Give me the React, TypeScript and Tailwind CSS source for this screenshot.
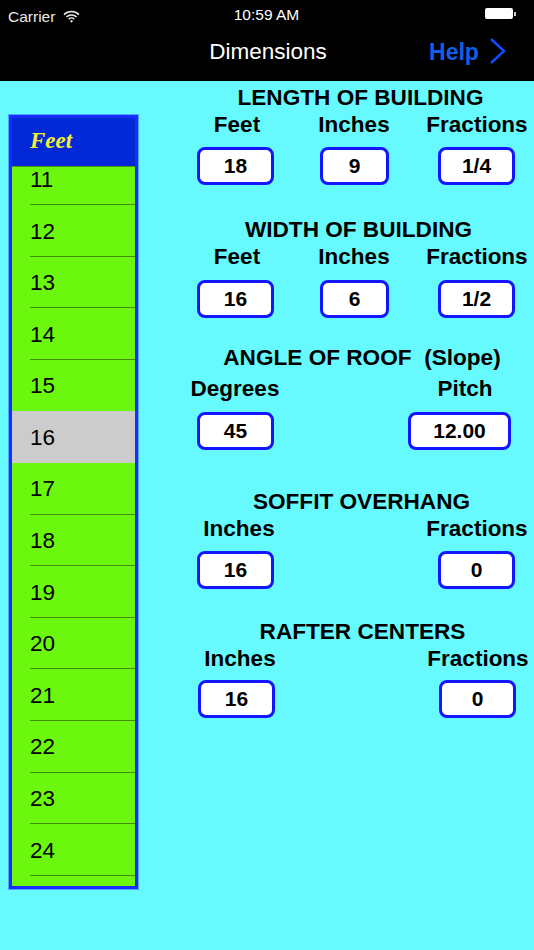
import React from "react";

const rows = [11, 12, 13, 14, 15, 16, 17, 18, 19, 20, 21, 22, 23, 24];

function Box({ value, className }: { value: string; className: string }) {
  return (
    <div className={`h-[38px] flex items-center justify-center rounded-[8px] border-[3px] border-[#1414ff] bg-white text-[21px] font-bold text-black shrink-0 ${className}`}>
      {value}
    </div>
  );
}

function Label({ text, className }: { text: string; className: string }) {
  return <div className={`text-center text-[22.5px] leading-[26px] font-bold text-black whitespace-nowrap shrink-0 ${className}`}>{text}</div>;
}

function Title({ text, className = "" }: { text: string; className?: string }) {
  return <div className={`text-center text-[22.6px] leading-[26px] font-bold text-black whitespace-pre ${className}`}>{text}</div>;
}

export default function App() {
  return (
    <div className="w-[534px] h-[950px] overflow-hidden flex flex-col bg-[#66faff] font-['Liberation_Sans',sans-serif]">
      <header className="h-[81px] bg-black text-white shrink-0 flex flex-col">
        <div className="h-[28px] relative flex items-center justify-center text-[15.5px] pt-[1px]">
          <div className="absolute left-[8px] top-[5px] flex items-center gap-[8px] text-[#e8e8e8]">
            <span>Carrier</span>
            <svg width="17" height="13" viewBox="0 0 17 13">
              <path d="M1 4.6a10.6 10.6 0 0 1 15 0M3.4 7a7.2 7.2 0 0 1 10.2 0M5.7 9.2a4 4 0 0 1 5.6 0" fill="none" stroke="#e8e8e8" strokeWidth="1.5" />
              <path d="M8.5 12.8 6.9 11a2.3 2.3 0 0 1 3.2 0z" fill="#e8e8e8" />
            </svg>
          </div>
          <span className="-ml-[1px]">10:59 AM</span>
          <div className="absolute left-[485px] top-[8px] flex items-center">
            <div className="w-[28px] h-[11px] rounded-[2px] bg-white" />
            <div className="w-[1.5px] h-[4px] bg-white/80 ml-[1px]" />
          </div>
        </div>
        <div className="h-[48px] relative flex items-center justify-center">
          <span className="text-[22.5px] -mt-[1px] ml-[2px]">Dimensions</span>
          <div className="absolute left-[425px] top-[7px] flex items-center">
            <span className="text-[23px] font-bold text-[#0f5fe8] w-[58px] text-center">Help</span>
            <svg width="18" height="28" viewBox="0 0 18 28" className="ml-[6px] -mt-[2px]">
              <path d="M2 2 15 14 2 26" fill="none" stroke="#0a50ff" strokeWidth="2.4" />
            </svg>
          </div>
        </div>
      </header>

      <main className="flex flex-1 min-h-0">
        <aside className="w-[129px] h-[774px] ml-[9px] mt-[34px] shrink-0 border-[3px] border-[#1a2cff] flex flex-col outline outline-1 outline-[#4aa8ff]">
          <div className="h-[48px] shrink-0 bg-[#0328d8] flex items-center pl-[18px] pb-[2px] font-['Liberation_Serif',serif] italic font-bold text-[23px] text-[#f5f032]">
            Feet
          </div>
          <div className="flex-1 overflow-hidden bg-[#6bf80e] border-t border-[#4a9a10]">
            <div className="-mt-[13.5px]">
              {rows.map((n) => (
                <div key={n} className={`h-[51.6px] flex items-center text-[22.5px] text-black pl-[18px] pt-[1px] ${n === 16 ? "bg-[#cccccc]" : ""} relative`}>
                  {n}
                  {n !== 15 && n !== 16 && <div className="absolute left-[18px] right-0 bottom-0 h-px bg-[#3f8f0c]" />}
                </div>
              ))}
            </div>
          </div>
        </aside>

        <section className="w-[354px] ml-[43px] flex flex-col">
          <div className="pt-[4px]">
            <Title text="LENGTH OF BUILDING" className="ml-[6px]" />
            <div className="flex mt-[1px]">
              <Label text="Feet" className="w-[80px] ml-[16px]" />
              <Label text="Inches" className="w-[80px] ml-[37px]" />
              <Label text="Fractions" className="w-[110px] ml-[28px]" />
            </div>
            <div className="flex mt-[9px] ml-[16px]">
              <Box value="18" className="w-[77px]" />
              <Box value="9" className="w-[69px] ml-[46px]" />
              <Box value="1/4" className="w-[77px] ml-[49px]" />
            </div>
          </div>

          <div className="pt-[32px]">
            <Title text="WIDTH OF BUILDING" className="ml-[2px]" />
            <div className="flex mt-[1px]">
              <Label text="Feet" className="w-[80px] ml-[16px]" />
              <Label text="Inches" className="w-[80px] ml-[37px]" />
              <Label text="Fractions" className="w-[110px] ml-[28px]" />
            </div>
            <div className="flex mt-[10px] ml-[16px]">
              <Box value="16" className="w-[77px]" />
              <Box value="6" className="w-[69px] ml-[46px]" />
              <Box value="1/2" className="w-[77px] ml-[49px]" />
            </div>
          </div>

          <div className="pt-[27px]">
            <Title text="ANGLE OF ROOF  (Slope)" className="ml-[9px]" />
            <div className="flex mt-[5px]">
              <Label text="Degrees" className="w-[100px] ml-[4px]" />
              <Label text="Pitch" className="w-[80px] ml-[140px]" />
            </div>
            <div className="flex mt-[10px] ml-[16px]">
              <Box value="45" className="w-[77px]" />
              <Box value="12.00" className="w-[103px] ml-[134px]" />
            </div>
          </div>

          <div className="pt-[39px]">
            <Title text="SOFFIT OVERHANG" className="ml-[8px]" />
            <div className="flex mt-[1px]">
              <Label text="Inches" className="w-[80px] ml-[18px]" />
              <Label text="Fractions" className="w-[110px] ml-[143px]" />
            </div>
            <div className="flex mt-[9px] ml-[16px]">
              <Box value="16" className="w-[77px]" />
              <Box value="0" className="w-[77px] ml-[164px]" />
            </div>
          </div>

          <div className="pt-[30px]">
            <Title text="RAFTER CENTERS" className="ml-[10px]" />
            <div className="flex mt-[1px]">
              <Label text="Inches" className="w-[80px] ml-[19px]" />
              <Label text="Fractions" className="w-[110px] ml-[143px]" />
            </div>
            <div className="flex mt-[8px] ml-[17px]">
              <Box value="16" className="w-[77px]" />
              <Box value="0" className="w-[77px] ml-[164px]" />
            </div>
          </div>
        </section>
      </main>
    </div>
  );
}
